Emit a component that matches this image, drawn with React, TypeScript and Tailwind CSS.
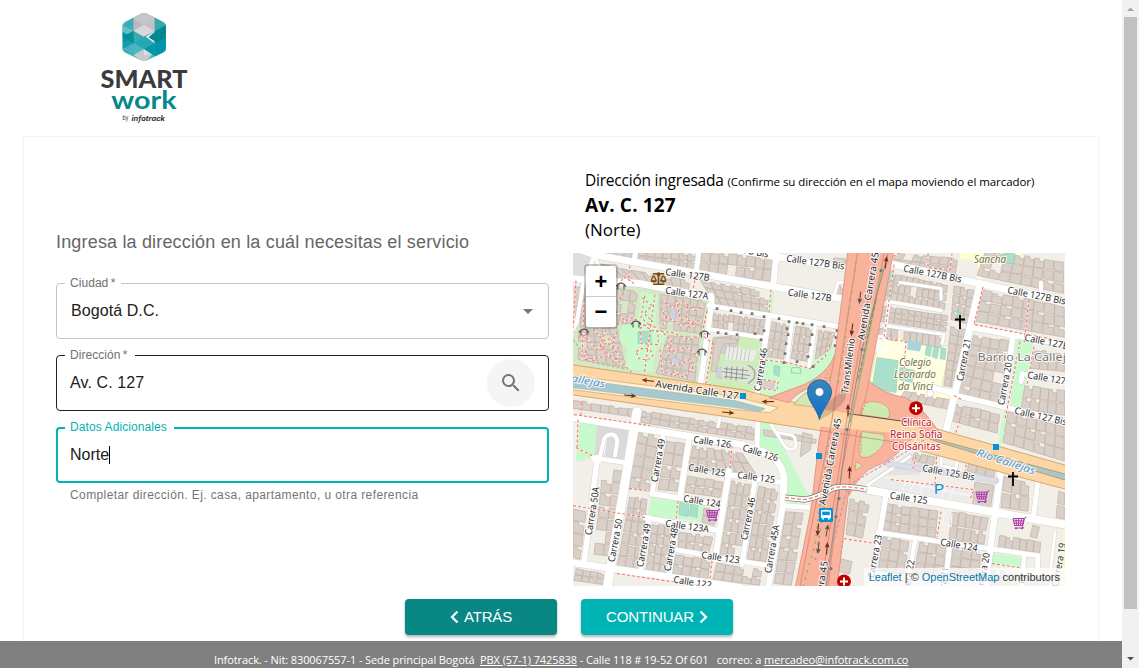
import React from "react";
import { FaBalanceScale } from "react-icons/fa";
import { MdSearch, MdArrowDropDown } from "react-icons/md";

type P = [number, number];
type Block = [P, P, P, P, number, number];

/* Building blocks: four corners (TL, TR, BR, BL), columns, rows */
const BLOCKS: Block[] = [
  [[600, 248], [633, 252], [631, 261], [600, 256], 4, 1],
  [[639, 250], [696, 254], [695, 270], [638, 262], 7, 2],
  [[702, 252], [774, 258], [771, 282], [700, 272], 8, 2],
  [[600, 264], [690, 280], [689, 292], [620, 280], 9, 1],
  [[700, 280], [770, 292], [767, 313], [714, 304], 7, 3],
  [[713, 313], [766, 320], [763, 335], [713, 328], 10, 2],
  [[771, 322], [789, 325], [784, 360], [765, 357], 3, 4],
  [[796, 326], [812, 329], [807, 362], [791, 359], 3, 4],
  [[819, 330], [835, 333], [830, 350], [815, 360], 3, 3],
  [[834, 258], [846, 259], [845, 266], [832, 264], 1, 1],
  [[838, 285], [845, 286], [843, 297], [835, 295], 1, 1],
  [[574, 286], [590, 288], [586, 330], [574, 326], 2, 4],
  [[617, 288], [638, 291], [633, 324], [612, 325], 3, 3],
  [[598, 302], [614, 300], [612, 326], [590, 326], 2, 3],
  [[660, 294], [706, 301], [701, 334], [660, 329], 6, 4],
  [[579, 330], [617, 327], [626, 368], [578, 360], 5, 5],
  [[668, 336], [700, 336], [695, 382], [656, 374], 5, 5],
  [[713, 338], [740, 334], [738, 346], [712, 354], 3, 2],
  [[573, 400], [637, 410], [637, 418], [573, 409], 7, 1],
  [[642, 411], [757, 428], [754, 441], [641, 423], 12, 2],
  [[763, 429], [817, 438], [816, 444], [764, 436], 2, 1],
  [[573, 508], [587, 511], [580, 560], [573, 558], 1, 4],
  [[603, 468], [625, 471], [613, 557], [594, 555], 2, 7],
  [[638, 431], [659, 437], [649, 492], [629, 489], 2, 5],
  [[667, 440], [685, 444], [678, 492], [658, 490], 2, 4],
  [[693, 446], [742, 453], [756, 474], [688, 470], 7, 2],
  [[688, 476], [724, 482], [720, 498], [685, 493], 4, 2],
  [[630, 496], [647, 499], [641, 571], [617, 568], 3, 6],
  [[652, 524], [672, 527], [665, 575], [646, 572], 3, 5],
  [[679, 532], [713, 537], [709, 554], [678, 549], 4, 2],
  [[676, 555], [711, 560], [708, 580], [672, 574], 4, 2],
  [[732, 481], [751, 484], [740, 559], [720, 556], 3, 6],
  [[759, 486], [779, 489], [766, 562], [747, 560], 3, 6],
  [[717, 563], [763, 570], [760, 586], [713, 580], 5, 2],
  [[786, 512], [804, 513], [792, 586], [774, 584], 2, 6],
  [[704, 508], [718, 511], [715, 526], [702, 523], 1, 2],
  [[576, 569], [606, 574], [603, 585], [574, 581], 4, 2],
  [[803, 430], [813, 434], [811, 450], [800, 458], 1, 1],
  [[850, 498], [870, 501], [863, 539], [846, 535], 2, 3],
  [[841, 558], [853, 561], [850, 575], [838, 572], 1, 1],
  [[897, 254], [958, 258], [956, 276], [890, 265], 7, 2],
  [[890, 273], [948, 285], [945, 310], [884, 301], 10, 3],
  [[883, 306], [948, 316], [946, 332], [881, 322], 10, 3],
  [[954, 286], [975, 290], [969, 325], [951, 320], 3, 4],
  [[951, 326], [968, 330], [957, 389], [944, 386], 2, 7],
  [[879, 327], [942, 336], [941, 348], [879, 339], 10, 1],
  [[986, 250], [1064, 262], [1064, 294], [977, 276], 8, 3],
  [[983, 290], [1065, 307], [1065, 338], [976, 322], 8, 3],
  [[974, 335], [1009, 341], [1000, 407], [957, 395], 4, 6],
  [[1035, 350], [1065, 354], [1065, 372], [1030, 369], 4, 2],
  [[1025, 385], [1065, 391], [1065, 416], [1021, 410], 5, 2],
  [[905, 391], [953, 400], [950, 410], [899, 400], 6, 1],
  [[954, 404], [1000, 414], [998, 434], [949, 421], 5, 2],
  [[1008, 412], [1065, 426], [1065, 462], [1003, 443], 6, 3],
  [[915, 452], [936, 457], [933, 466], [912, 461], 3, 1],
  [[970, 457], [996, 465], [994, 478], [967, 472], 3, 1],
  [[975, 482], [994, 485], [990, 512], [972, 509], 1, 1],
  [[1004, 475], [1030, 482], [1028, 512], [1001, 508], 3, 2],
  [[1059, 490], [1065, 492], [1065, 520], [1056, 518], 1, 2],
  [[884, 503], [938, 511], [936, 538], [881, 530], 6, 3],
  [[952, 511], [989, 518], [984, 545], [949, 540], 5, 2],
  [[993, 534], [1041, 542], [1040, 553], [991, 548], 7, 1],
  [[1033, 525], [1040, 527], [1037, 539], [1030, 537], 1, 1],
  [[883, 537], [910, 541], [904, 575], [878, 571], 3, 3],
  [[920, 542], [946, 546], [943, 577], [914, 573], 3, 3],
  [[953, 547], [982, 552], [978, 580], [949, 576], 3, 3],
  [[991, 570], [1020, 574], [1018, 587], [989, 587], 3, 1],
  [[1027, 573], [1050, 577], [1048, 587], [1025, 587], 2, 1],
];

function noise(seed: number) {
  const v = Math.sin(seed * 12.9898) * 43758.5453;
  return v - Math.floor(v);
}

function buildingPath() {
  let d = "";
  let s = 1;
  for (const [a, b, c, e, cols, rows] of BLOCKS) {
    const at = (u: number, v: number) => {
      const x = (a[0] * (1 - u) + b[0] * u) * (1 - v) + (e[0] * (1 - u) + c[0] * u) * v;
      const y = (a[1] * (1 - u) + b[1] * u) * (1 - v) + (e[1] * (1 - u) + c[1] * u) * v;
      return `${x.toFixed(1)} ${y.toFixed(1)}`;
    };
    for (let i = 0; i < cols; i++) {
      for (let j = 0; j < rows; j++) {
        s++;
        if (cols * rows > 4 && noise(s) < 0.03) continue;
        const gx = noise(s + 500) * 0.09;
        const gy = noise(s + 900) * 0.14;
        const u0 = i / cols;
        const u1 = (i + 1 - gx) / cols;
        const v0 = (j + gy) / rows;
        const v1 = (j + 0.98) / rows;
        const um = (u0 + u1) / 2;
        const vm = v0 + (v1 - v0) * 0.25;
        d += noise(s + 77) > 0.7
          ? `M${at(u0, v0)}L${at(um, v0)}L${at(um, vm)}L${at(u1, vm)}L${at(u1, v1)}L${at(u0, v1)}Z`
          : `M${at(u0, v0)}L${at(u1, v0)}L${at(u1, v1)}L${at(u0, v1)}Z`;
      }
    }
  }
  return d;
}

const ROADS: [string, number][] = [
  ["M573 248L598 256L847 300", 7],
  ["M712 246L847 269", 7],
  ["M572 279L640 284L711 298", 7],
  ["M709 306L840 327", 5],
  ["M636 250L634 263", 5],
  ["M699 250L696 274", 5],
  ["M711 296Q713 303 710 315L700 388", 5.5],
  ["M777 250L773 288", 6],
  ["M769 317L757 396", 5.5],
  ["M792 322L787 362", 4],
  ["M815 327L809 367", 4],
  ["M711 330L763 338", 4.5],
  ["M834 296L838 283L847 283", 3],
  ["M596 252L583 285L577 322L573 330", 4],
  ["M592 252L602 272", 3],
  ["M890 264L1065 303", 7],
  ["M980 284L950 415L944 440", 7],
  ["M973 328L1065 345", 6],
  ["M1013 337L1003 405", 5.5],
  ["M934 388L957 396L1065 422", 5.5],
  ["M1021 382L1022 374L1065 381", 5],
  ["M889 265L872 340", 2],
  ["M888 302L941 311", 3.5],
  ["M900 283L941 289V300", 3],
  ["M883 326L944 335L942 344", 3],
  ["M1041 283V294", 4],
  ["M889 303L884 340", 3],
  ["M572 418L742 445L765 453Q781 460 784 478L783 506", 7],
  ["M637 412L607 589", 9],
  ["M597 460L584 565", 5.5],
  ["M593 458L625 463", 5],
  ["M600 457L604 440Q606 434 613 435Q618 437 617 444L615 456", 4],
  ["M572 563L742 588", 7],
  ["M663 438L652 494", 5],
  ["M689 440L680 498", 6],
  ["M652 494L720 505", 6],
  ["M645 518L719 531", 5.5],
  ["M649 518L640 573", 5],
  ["M677 523L669 577", 5],
  ["M675 550L768 566", 5],
  ["M729 471L715 560", 6],
  ["M727 475L783 483", 5.5],
  ["M755 481L742 565", 5],
  ["M783 505L768 589", 6],
  ["M783 506L808 508", 5],
  ["M758 420L757 447", 5],
  ["M720 418L718 427", 3],
  ["M867 490L900 496L1065 525", 8],
  ["M1002 462L985 589", 6.5],
  ["M1038 481L1033 520", 5],
  ["M878 533L940 542L1038 556L1037 575L1020 573", 5],
  ["M886 496L870 589", 5.5],
  ["M915 541L907 589", 4.5],
  ["M950 543L945 589", 5],
  ["M1055 533L1050 575", 3],
  ["M1024 556L1022 589", 4.5],
  ["M942 450L941 466L956 469L958 458L943 455", 3],
  ["M771 425L785 447Q788 451 794 449Q797 447 795 440Q795 436 789 435L777 433", 3],
  ["M867 486L910 457", 3],
];

const PATHS = [
  "M630 266L628 279", "M696 276L693 290", "M771 290L769 313", "M576 281L572 345",
  "M584 300L582 360", "M655 295L643 384", "M612 327L633 318L652 331L672 333L690 340L706 334",
  "M641 334Q636 328 648 325Q660 325 658 345L641 344Z", "M636 352Q648 344 653 355Q650 362 639 359Z",
  "M586 338L597 350L607 343L620 356L612 364", "M593 329L604 341L615 338", "M664 345L675 352L686 347L697 356",
  "M661 300L672 308L684 302L695 311L703 306", "M665 316L681 326L699 321", "M600 296L611 301L624 297",
  "M760 360L788 363L810 369L825 357L830 345", "M829 333L837 338", "M713 342L706 384L757 399",
  "M763 380L778 382L777 391L764 389", "M581 403L581 416", "M576 448L594 457", "M578 420L577 450",
  "M573 506L645 518", "M629 489L650 491", "M678 501L676 520", "M732 446L730 470", "M712 561L710 580",
  "M617 574L740 592", "M928 254V268L950 270L952 254", "M975 325L1065 342", "M983 287L974 325",
  "M1029 300L1024 345", "M954 396L962 400", "M1020 342L1005 420", "M1034 347L1027 385",
  "M893 257L900 253", "M894 265L884 338L906 342L903 385",
  "M844 539L876 544", "M843 541L836 589", "M938 432L935 485", "M967 460L965 473", "M891 480L974 490L970 500",
  "M941 512L937 538", "M916 457L912 472", "M992 564L1019 568", "M960 421L954 438", "M616 290L624 277L634 284",
  "M574 415L650 426", "M704 337L714 345", "M707 311L703 329", "M585 360L610 356L625 366L634 375",
  "M598 306L606 318L616 312L626 322", "M645 296L641 318L650 326", "M588 346L584 356L596 362", "M665 360L676 366L690 360L694 372",
  "M660 330L672 342L668 356", "M676 300L680 318L690 328", "M606 330L600 346L610 356",
  "M642 298L652 306L644 314L653 322", "M661 308L668 322L660 326", "M688 306L686 318L696 328", "M617 332L612 346L622 350",
  "M672 372L684 378L694 366", "M660 350L662 372L676 376", "M590 292L598 298L592 312L586 322", "M578 338L590 334",
];

interface LabelProps {
  a: P;
  b: P;
  children: string;
  size?: number;
  fill?: string;
  italic?: boolean;
}

function Label({ a, b, children, size = 9.6, fill = "#2b2b2b", italic }: LabelProps) {
  const dx = b[0] - a[0];
  const dy = b[1] - a[1];
  return (
    <text
      transform={`translate(${a[0]} ${a[1]}) rotate(${(Math.atan2(dy, dx) * 180) / Math.PI})`}
      textLength={Math.hypot(dx, dy)}
      lengthAdjust="spacingAndGlyphs"
      fontSize={size}
      fill={fill}
      fontStyle={italic ? "italic" : "normal"}
      stroke="#ffffff"
      strokeOpacity={0.85}
      strokeWidth={2}
      strokeLinejoin="round"
      paintOrder="stroke"
    >
      {children}
    </text>
  );
}

const LABELS: [string, number, number, number, number][] = [
  ["Calle 127B", 665, 275.5, 709, 281.5],
  ["Calle 127A", 665, 294, 708, 300],
  ["Calle 127B Bis", 711, 248, 768, 258],
  ["Calle 127B Bis", 786, 262, 844, 270],
  ["Calle 127B", 787.5, 296, 831, 302],
  ["TransMilenio", 848, 394.5, 855, 339],
  ["Carrera 46", 760.5, 392, 767.5, 349],
  ["Calle 127B Bis", 903, 272, 961, 283],
  ["Calle 127B Bis", 1007, 293.5, 1065, 305],
  ["Calle 127B", 1024, 341, 1068, 350],
  ["Carrera 21", 963, 382, 971, 339.5],
  ["Calle 127A", 1027, 378.5, 1071, 386],
  ["Carrera 20", 1004, 406, 1012, 363.5],
  ["Calle 127 Bis", 1014, 414, 1066, 426],
  ["Calle 126", 693, 443, 730.5, 448.5],
  ["Calle 125", 688, 471, 725, 477],
  ["Calle 124", 683, 502, 720, 508],
  ["Calle 123A", 665, 527, 708.5, 533],
  ["Calle 123", 701, 558.5, 739, 564],
  ["Calle 122", 673, 583, 711, 589],
  ["Carrera 49", 657.5, 483, 665, 440],
  ["Carrera 50A", 591.5, 536, 599.5, 488],
  ["Carrera 50", 614.5, 563, 622.5, 520],
  ["Carrera 49", 643, 568, 651, 524.5],
  ["Carrera 48", 670.5, 572, 678, 529],
  ["Calle 125", 737, 478.5, 774.5, 483.5],
  ["Carrera 46", 747, 541, 755.5, 498.5],
  ["Carrera 45A", 771, 574, 779.5, 526],
  ["Avenida Carrera 45", 864, 341, 879, 253],
  ["Avenida Carrera 45", 825.5, 506, 841.5, 419],
  ["Avenida Carrera 45", 813, 651, 828, 562],
  ["Calle 125", 889.5, 499, 927, 504.5],
  ["Carrera 23", 874, 579, 882, 536],
  ["Calle 125 Bis", 922, 471.5, 974, 481],
  ["Calle 124", 940, 545.5, 977, 552],
  ["Carrera 22", 907, 604, 914.5, 561],
  ["Carrera 20", 982, 597, 990, 554],
  ["Carrera 19", 1058, 588, 1066, 544],
  ["Carrera 21", 942, 611, 949, 568],
  ["Carrera 19", 1018, 619, 1026, 576],
];

function Arrow({ x, y, r, c = "#6b3a0c" }: { x: number; y: number; r: number; c?: string }) {
  return (
    <g transform={`translate(${x} ${y}) rotate(${r})`}>
      <path d="M-6 0H3" stroke={c} strokeWidth={1.1} />
      <path d="M1 -2.4L6.5 0L1 2.4L2 0Z" fill={c} />
    </g>
  );
}

function Cart({ x, y }: { x: number; y: number }) {
  return (
    <g transform={`translate(${x} ${y})`} stroke="#ac39ac" fill="none" strokeWidth={1}>
      <path d="M-6.5 -4.5H4.5L3 2.5H-5Z M-6 -2.2H4 M-5.5 .2H3.5 M-3.6 -4.5L-3 2.5 M-1 -4.5V2.5 M1.8 -4.5L1 2.5 M7 -6L5 -5L3 3.5L4 5H-5" />
      <circle cx={-3.5} cy={5.4} r={0.6} fill="#ac39ac" />
      <circle cx={2.5} cy={5.4} r={0.6} fill="#ac39ac" />
    </g>
  );
}

function Hospital({ x, y }: { x: number; y: number }) {
  return (
    <g transform={`translate(${x} ${y})`}>
      <circle r={6.9} fill="#bf0000" />
      <path d="M-4 0H4M0 -4V4" stroke="#fff" strokeWidth={2} />
    </g>
  );
}

function Entrance({ x, y }: { x: number; y: number }) {
  return <path d={`M${x - 3} ${y + 5}V${y}M${x + 3} ${y}V${y + 5}M${x - 5} ${y + 2}L${x - 3} ${y - 0.5}Q${x} ${y - 2.5} ${x + 3} ${y - 0.5}L${x + 5} ${y + 2}`} stroke="#555" strokeWidth={1.1} fill="none" />;
}

const BOLLARDS: P[] = [
  [717, 309], [731, 311], [741, 313], [752, 314], [764, 317], [779, 319], [789, 322], [797, 323], [803, 324], [812, 325],
  [824, 327], [837, 331], [836, 338], [835, 346], [718, 333], [726, 334], [737, 335], [755, 334], [761, 340], [764, 331],
  [788, 335], [786, 344], [785, 354], [784, 363], [797, 362], [812, 335], [810, 345], [808, 357], [813, 367], [787, 329],
];

function MapDrawing() {
  return (
    <svg className="block h-[333px] w-[492px] [font-family:'Noto_Sans',sans-serif]" viewBox="573 253.4 492 333">
      <rect x={572} y={252} width={495} height={336} fill="#f2efe9" />
      {/* housing estates and parks */}
      <path d="M580 284L608 280L711 300L700 388L572 366V345Z" fill="#d6e8c6" />
      <path d="M572 252H592L583 284L572 282Z" fill="#dedede" />
      <path d="M713 337L745 337L764 342L755 392L704 388Z" fill="#cfecbb" />
      <path d="M757 396L764 358L808 368L830 343L836 352L826 378L795 398L760 400Z" fill="#c8facc" />
      <path d="M771 290L774 290L772 316L766 314Z" fill="#c8facc" />
      <path d="M822 348L833 350L826 366L818 364Z" fill="#c8facc" />
      <path d="M579 422L597 426L594 458L576 462Z" fill="#c8facc" />
      <path d="M597 426L628 431L625 464L594 458Z" fill="#dadada" />
      <path d="M652 496L704 505L703 522L647 516Z" fill="#c8facc" />
      <path d="M760 421L772 424L809 497L802 504L784 504L785 474L760 448Z" fill="#c8facc" />
      <path d="M1016 339L1033 342L1022 408L1010 405Z" fill="#c8facc" />
      <path d="M1004 412L1009 413L1002 445L998 443Z" fill="#c8facc" />
      <path d="M992 554L1022 558L1020 569L990 565Z" fill="#c8facc" />
      {/* school grounds */}
      <path d="M881 331L906 341L950 347L942 386L953 398L949 411L898 397L870 382Z" fill="#ffffe0" stroke="#e2df9a" strokeWidth={0.7} />
      <path d="M960 252L1022 252L1020 267L983 263L981 282L977 280L978 262L960 259Z" fill="#ffffd0" />
      <path d="M573 340L590 362L630 370" stroke="#a9d28f" strokeWidth={2} fill="none" strokeDasharray="3 2" />
      <path d="M884 479L974 491L970 502L868 487Z" fill="#ebebeb" />
      <path d="M868 482L910 453L925 461L919 475L886 476Z" fill="#e3e3e3" />
      <path d={buildingPath()} fill="#d9d0c9" stroke="#c3b3a7" strokeWidth={0.75} />
      <path d="M641 293L658 295L655 327L667 332L664 342L657 346L652 373L626 369L627 348L619 340L622 326L638 323Z" fill="#c8facc" />
      <g fill="#aae0cb" stroke="#8fcdb5" strokeWidth={0.6}>
        <path d="M877 358L898 361L896 393L872 388Z" />
        <path d="M638 332H651V344H638Z M680 502L689 503L688 517L679 515Z M691 504L698 505L697 518L689 516Z" />
        <path d="M927 345L932 346L930 357L925 355Z M934 347L939 348L937 359L932 357Z M941 348L946 349L945 360L940 359Z" />
        <path d="M1003 254L1015 254L1014 264L1001 263Z M887 270L894 272L892 283L886 281Z M887 292L890 293V296H887Z M774 366L780 367L779 377L774 375Z M958 310L960 311V318L957 317Z M900 368L915 371L912 383L899 380Z" />
      </g>
      <path d="M908 341L922 343L920 352L907 350Z" fill="#a9d3df" />
      <path d="M792 368L800 368L801 374L791 373Z" fill="none" stroke="#9bd0a2" />
      <g fill="#d1d1de" stroke="#b9b9c9" strokeWidth={0.6}>
        <path d="M671 308L677 310L674 322L669 320Z M719 345L726 346L725 354L718 353Z M672 357L680 360L678 367L671 365Z" />
        <path d="M716 369L724 367L722 379L717 378Z" />
      </g>
      <path d="M714 345L718 338L737 340L736 344L724 344L720 354L716 372L711 372Z" fill="#d9d0c9" stroke="#c3b3a7" strokeWidth={0.7} />
      <path d="M762 381L775 382L773 390L762 388Z" fill="#d9d0c9" stroke="#c3b3a7" strokeWidth={0.7} />
      <path d="M727 347L757 351L753 362L725 360Z" fill="#ededed" />
      <path d="M722 364L756 367L752 384L722 379Z" fill="#dde6d4" />
      <path d="M730 347L728 360M734 348L732 360M738 348L736 361M742 349L740 361M746 349L744 361M750 350L748 362" fill="none" stroke="#b9c6ae" strokeWidth={0.8} />
      <path d="M606 441L604 456M892 480L970 496M906 482L902 491M914 483L910 492M924 484L920 494M946 487L940 502M953 488L949 503M944 512L943 525L951 527L952 513" fill="none" stroke="#f8f8f8" strokeWidth={1.2} />
      <path d="M722 372L750 376M727 367L726 379M732 367L731 380M737 367L736 381M743 368L742 380M724 369L748 371M724 377L747 379" fill="none" stroke="#8f8f8f" strokeWidth={0.9} />
      <path d="M748 366Q757 369 754 379L748 384" fill="none" stroke="#aaa" strokeWidth={1.6} />
      {/* streets */}
      <g fill="none" strokeLinejoin="round" strokeLinecap="round">
        {ROADS.map(([d, w]) => <path key={`c${d}`} d={d} stroke="#d3cfca" strokeWidth={w + 0.8} />)}
        {ROADS.map(([d, w]) => <path key={d} d={d} stroke="#ffffff" strokeWidth={w} />)}
        <path d="M888 464L996 481" stroke="#c5c5d6" strokeWidth={6} />
        <path d="M888 464L996 481" stroke="#dddde8" strokeWidth={5} />
        <path d="M1067 528L1060 589" stroke="#f7fabf" strokeWidth={6} />
      </g>
      <circle cx={597} cy={460} r={4.5} fill="#fff" />
      <circle cx={930} cy={394} r={3.5} fill="#fff" stroke="#bbb" strokeWidth={0.5} />
      <path d="M930 388L956 392" stroke="#fff" strokeWidth={3} />
      <path d="M878 337Q888 335 886 350Q881 356 877 350Z" fill="none" stroke="#fff" strokeWidth={3} />
      <g fill="none" stroke="#fff" strokeOpacity={0.6} strokeWidth={1.8}>
        {PATHS.map((d) => <path key={`u${d}`} d={d} />)}
      </g>
      <g fill="none" stroke="#f5766b" strokeWidth={1.1} strokeDasharray="3 2">
        {PATHS.map((d) => <path key={d} d={d} />)}
      </g>
      <g fill="#777">
        {BOLLARDS.map(([x, y]) => <rect key={`${x}-${y}`} x={x - 1.3} y={y - 1.3} width={2.7} height={2.7} />)}
      </g>
      {/* Avenida Calle 127 with the canal */}
      <path d="M571 365L742 390L790 402L900 419L1067 466V490L900 446L820 431L740 419L571 395Z" fill="#fcd6a4" stroke="#c98f46" strokeWidth={0.7} />
      <path d="M571 376L735 397L778 408L770 413L735 410L571 390Z" fill="#fff1d6" stroke="#cf9a55" strokeWidth={0.6} />
      <path d="M571 379L735 401L765 409L760 412L735 408L571 388Z" fill="#a5c9cf" stroke="#8fb4b5" strokeWidth={0.5} />
      <path d="M915 434L1067 475V481L940 443Z" fill="#a5c9cf" stroke="#b98f57" strokeWidth={0.8} />
      <path d="M780 405L905 428" stroke="#ba9d85" strokeWidth={0.8} strokeDasharray="4 2" />
      {/* Avenida Carrera 45 interchange */}
      <g fill="#f9b29c" stroke="#d98572" strokeWidth={0.7}>
        <path d="M835 355Q828 374 804 385L769 398L789 403Q797 392 815 386L836 379Z" />
        <path d="M866 378Q880 394 905 398Q922 406 940 434L928 436Q914 434 903 447Q893 461 877 466Q860 472 849 496L844 460L849 435L857 420Z" />
        <path d="M848 250H894L874 355L866 396L858 422L850 480L837 589H795L811 510L819 440L822 425L835 355Z" />
      </g>
      <path d="M779 403L850 414L900 421L925 431L918 438L890 433L819 427L785 418Z" fill="#fcd6a4" />
      <g fill="#cdebb0" stroke="#e0806f" strokeWidth={0.6}>
        <path d="M794 405Q800 395 814 389L819 408Z" />
        <path d="M863 404Q876 399 886 406Q892 412 888 419L861 415Z" />
        <path d="M862 432L884 435Q887 444 876 453Q866 461 860 456Q857 449 862 432Z" />
        <path d="M856 462L863 466L855 471Z M828 374L830 378L825 378Z" />
      </g>
      <path d="M866 402L861 415M861 434L861 453" stroke="#f5766b" strokeDasharray="2 1.5" />
      <g fill="none">
        <path d="M848 414L920 424" stroke="#333" strokeWidth={0.8} />
        <path d="M820 431L905 444M858 250L838 380L832 420L800 587" stroke="#d27866" strokeWidth={0.7} />
        <path d="M876 254L846 425L821 587M884 254L858 388L842 470L828 587" stroke="#d27866" strokeWidth={0.7} />
        <path d="M882 268L863 366L850 423" stroke="#a7b980" strokeWidth={1.4} />
        <path d="M856 262L838 385M830 430L815 545L803 587M838 425L815 562" stroke="#a9ad70" strokeWidth={1.7} strokeDasharray="2.5 5" />
        <path d="M888 254L862 350L846 440L838 500L826 587" stroke="#888" strokeWidth={0.9} />
        <path d="M876 300L858 380" stroke="#70945e" strokeWidth={1} strokeDasharray="5 2" />
        <path d="M847 490L822 587" stroke="#a99bb0" strokeWidth={1} strokeDasharray="4 2" />
        <path d="M785 498L805 500Q820 497 832 489Q842 485 867 490" stroke="#777" strokeWidth={6} />
        <path d="M785 498L805 500Q820 497 832 489Q842 485 867 490" stroke="#fff" strokeWidth={4.6} />
        <path d="M785 498L805 500Q820 497 832 489Q842 485 867 490" stroke="#ef8074" strokeWidth={1.3} strokeDasharray="4 2" />
        <path d="M853 483L908 451L928 438" stroke="#a56fa5" strokeWidth={0.8} strokeDasharray="3 2" />
      </g>
      <g fill="#777">
        <circle cx={881} cy={271} r={1.6} /><circle cx={862} cy={350} r={1.6} /><circle cx={839} cy={499} r={1.6} />
        <circle cx={836} cy={517} r={1.6} /><circle cx={831} cy={569} r={1.6} /><circle cx={847} cy={430} r={1.6} />
      </g>
      {LABELS.map(([t, x1, y1, x2, y2]) => <Label key={`${t}${x1}${y1}`} a={[x1, y1]} b={[x2, y2]}>{t}</Label>)}
      <Label a={[742, 451]} b={[777, 462]}>Calle 126</Label>
      <Label a={[655, 387.5]} b={[738, 400]} size={10}>Avenida Calle 127</Label>
      <Label a={[544, 377]} b={[604.5, 388]} size={10.5} fill="#5b94c4" italic>Río Callejas</Label>
      <Label a={[976, 456]} b={[1034, 475]} size={10.5} fill="#5b94c4" italic>Río Callejas</Label>
      <Label a={[974, 263]} b={[1006, 263]} size={10} fill="#74743a" italic>Sancha</Label>
      <Label a={[899, 366]} b={[931, 366]} size={10} fill="#74743a" italic>Colegio</Label>
      <Label a={[894, 378]} b={[936, 378]} size={10} fill="#74743a" italic>Leonardo</Label>
      <Label a={[898, 390]} b={[933, 390]} size={10} fill="#74743a" italic>da Vinci</Label>
      <Label a={[901, 426.4]} b={[931.5, 426.4]} size={10} fill="#bf2030">Clínica</Label>
      <Label a={[890, 438.4]} b={[942.5, 438.4]} size={10} fill="#bf2030">Reina Sofia</Label>
      <Label a={[892, 450.4]} b={[940.5, 450.4]} size={10} fill="#bf2030">Colsánitas</Label>
      <Label a={[977.5, 361.5]} b={[1073, 361.5]} size={11.5} fill="#777">Barrio La Calleja</Label>
      <Arrow x={648} y={381} r={187} />
      <Arrow x={630} y={396} r={5} />
      <Arrow x={728} y={413} r={5} />
      <Arrow x={768} y={402} r={180} c="#6b2a1c" />
      <Arrow x={852} y={330} r={97} c="#6b2a1c" />
      <Arrow x={860} y={298} r={97} c="#555" />
      <Arrow x={886} y={263} r={-83} c="#6b2a1c" />
      <Arrow x={848} y={411} r={-90} c="#6b2a1c" />
      <Arrow x={849.5} y={473} r={-87} c="#6b2a1c" />
      <Arrow x={818} y={530} r={95} c="#6b2a1c" />
      <Arrow x={827} y={531} r={-80} c="#555" />
      <Arrow x={818.5} y={548} r={95} c="#555" />
      <Arrow x={827} y={549} r={-85} c="#6b2a1c" />
      <Entrance x={621} y={285} /><Entrance x={636} y={323} /><Entrance x={584} y={331} />
      <Entrance x={704.5} y={333} /><Entrance x={702} y={351} />
      <FaBalanceScale x={650.5} y={271} width={15} height={14} color="#734a08" />
      <path d="M960 315.4V329.4M955 319.9H965M1013 472.4V486.4M1008 476.9H1018" stroke="#000" strokeWidth={1.8} />
      <g fill="#0092da">
        <rect x={740} y={393.4} width={6} height={6} />
        <rect x={816} y={453.4} width={6} height={6} />
        <rect x={993} y={444.4} width={6} height={6} />
        <rect x={819} y={508.4} width={14} height={14} rx={1.5} />
      </g>
      <path d="M821 511Q826 509.5 831 511V518.5H829.8V520H828V518.5H824V520H822.2V518.5H821Z" fill="#fff" />
      <path d="M822.2 512H829.8V515.5H822.2Z" fill="#0092da" />
      <text x={934} y={494.4} fontSize={15} fontWeight={500} fill="#0092da" className="[font-family:'Liberation_Sans',sans-serif]">P</text>
      <Cart x={713} y={515.4} /><Cart x={982.5} y={497} /><Cart x={1019.5} y={523.4} />
      <Hospital x={916} y={408.6} /><Hospital x={844} y={581.8} />
      {/* location marker */}
      <path d="M820 420Q826 402 839 394Q848 391 845 400Q839 411 820 420Z" fill="#000" opacity={0.14} />
      <defs>
        <linearGradient id="pin" x1="0" y1="0" x2="0" y2="1">
          <stop offset="0" stopColor="#3a85ba" /><stop offset="1" stopColor="#126fc6" />
        </linearGradient>
      </defs>
      <path d="M819.5 419.9C817 409.4 807.5 401.4 807.5 392.2A12 12 0 0 1 831.5 392.2C831.5 401.4 822 409.4 819.5 419.9Z" fill="url(#pin)" stroke="#2e6c97" />
      <circle cx={819.5} cy={392.4} r={4.3} fill="#fff" stroke="#2e6c97" strokeWidth={0.6} />
    </svg>
  );
}

function Logo() {
  return (
    <svg width={100} height={120} viewBox="94 8 100 120" className="block">
      <defs>
        <clipPath id="hex">
          <path d="M183 41Q192 36 201 41L249 65Q258 70 258 80V143Q258 153 249 158L201 181Q192 185 183 181L136 158Q127 153 127 143V80Q127 70 136 65Z" />
        </clipPath>
      </defs>
      <g transform="translate(80 0) scale(.3333)" clipPath="url(#hex)">
        <path d="M120 30H265V190H120Z" fill="#4bb4bf" />
        <path d="M127 76L161 52V92L127 112Z" fill="#3aadb9" />
        <path d="M127 76L161 92L127 112Z" fill="#65bdc7" />
        <path d="M127 95L161 114L127 130Z" fill="#0595a9" />
        <path d="M127 130L161 114V165L127 150Z" fill="#129eb0" />
        <path d="M127 148L161 130V165Z" fill="#48b4c1" />
        <path d="M161 92L192 110L161 130Z" fill="#3aacaf" />
        <path d="M161 92L127 110L161 130Z" fill="#078f99" />
        <path d="M161 130L192 110L224 130L192 148Z" fill="#24a8b4" />
        <path d="M161 130L192 148L161 165Z" fill="#4cb7c0" />
        <path d="M161 38H224V94L192 110L161 92Z" fill="#c5c4ca" />
        <path d="M161 56L192 74L161 92Z" fill="#b9b8be" />
        <path d="M192 38L224 56L192 74L161 56Z" fill="#c7c5ca" />
        <path d="M161 92L192 74L224 94L192 110Z" fill="#d8d7dc" />
        <path d="M192 74L224 56V94Z" fill="#c2c1c7" />
        <path d="M161 165L192 147L220 160L192 190Z" fill="#cac9ce" />
        <path d="M192 147L220 160L192 166Z" fill="#dddce0" />
        <path d="M224 50L262 76L224 94Z" fill="#36a9aa" />
        <path d="M224 94L262 74V112Z" fill="#008a8d" />
        <path d="M192 110L224 94V130Z" fill="#078b93" />
        <path d="M196 110L224 94V98L208 112L224 122V130Z" fill="#e9e9ec" />
        <path d="M224 94L262 112L224 130Z" fill="#03878c" />
        <path d="M206 112L224 96V124Z" fill="#03878c" />
        <path d="M224 130L262 112V150L224 170Z" fill="#0096a8" />
        <path d="M192 147L224 130V168Z" fill="#0097a6" />
      </g>
      <text x={100.6} y={87.8} textLength={86.8} lengthAdjust="spacingAndGlyphs" fontSize={25} fontWeight={900} fill="#3b3b3b" className="[font-family:Lato,sans-serif]">SMART</text>
      <text x={111.3} y={109} textLength={65.2} lengthAdjust="spacingAndGlyphs" fontSize={25} fontWeight={700} fill="#07898c" className="[font-family:Lato,sans-serif]">work</text>
      <text x={122.5} y={120.3} textLength={6} lengthAdjust="spacingAndGlyphs" fontSize={6} fill="#333" className="[font-family:Inter,sans-serif]">by</text>
      <text x={131.5} y={120.5} textLength={33.5} lengthAdjust="spacingAndGlyphs" fontSize={7} fontWeight={700} fontStyle="italic" fill="#333" className="[font-family:Inter,sans-serif]">infotrack</text>
    </svg>
  );
}

function Field({ label, labelClass, boxClass, children }: { label: string; labelClass: string; boxClass: string; children: React.ReactNode }) {
  return (
    <div className={`relative flex h-[56px] w-[493px] items-center justify-between rounded ${boxClass}`}>
      <span className={`absolute bg-white text-[12px] leading-[14px] whitespace-pre ${labelClass}`}>{label}</span>
      {children}
    </div>
  );
}

export default function App() {
  return (
    <div className="flex h-[668px] w-[1139px] overflow-hidden bg-white [font-family:'Liberation_Sans',sans-serif]">
      <div className="flex w-[1122px] flex-col">
        <header className="h-[137px] shrink-0 pt-[8px] pl-[94px]">
          <Logo />
        </header>
        <main className="mx-[24px] flex h-[504px] w-[1074px] shrink-0 flex-col shadow-[0_0_2px_rgba(0,0,0,0.16)]">
          <div className="flex h-[450px] gap-[24px] pl-[32px]">
            <section className="flex w-[493px] flex-col pt-[93px]">
              <h1 className="h-[24px] text-[18px] leading-[24px] tracking-[0.17px] whitespace-nowrap text-[#666]">Ingresa la dirección en la cuál necesitas el servicio</h1>
              <div className="mt-[29px] flex flex-col gap-[16px]">
                <Field label="Ciudad *" labelClass="-top-[8px] left-[8px] pr-[6px] pl-[5px] tracking-[0.05px] [word-spacing:-1px] text-[#707070]" boxClass="border border-[#c4c4c4]">
                  <span className="pl-[14px] text-[16px] tracking-[0.08px] text-[#212121]">Bogotá D.C.</span>
                  <MdArrowDropDown className="mr-[8px] size-[24px] text-[#757575]" />
                </Field>
                <Field label="Dirección *" labelClass="-top-[8px] left-[8px] pr-[7px] pl-[5px] tracking-[0.05px] [word-spacing:-1px] text-[#707070]" boxClass="border border-[#212121]">
                  <span className="pl-[13px] text-[16px] tracking-[0.1px] text-[#212121]">Av. C. 127</span>
                  <button className="mr-[13px] flex size-[48px] items-center justify-center rounded-full bg-[#f5f5f5]">
                    <MdSearch className="size-[24px] text-[#757575]" />
                  </button>
                </Field>
                <Field label="Datos Adicionales" labelClass="-top-[9px] left-[7px] pr-[7px] pl-[5px] tracking-[0.09px] text-[#00b3b5]" boxClass="border-2 border-[#00b3b5]">
                  <span className="flex h-[18px] items-center border-r border-black pl-[12px] text-[16px] text-[#212121]">Norte</span>
                </Field>
              </div>
              <p className="mt-[4px] pl-[14px] text-[12px] leading-[16px] tracking-[0.4px] whitespace-nowrap text-[#757575]">Completar dirección. Ej. casa, apartamento, u otra referencia</p>
            </section>
            <section className="flex w-[493px] flex-col pt-[32px] text-black [font-family:'Open_Sans','Noto_Sans',sans-serif]">
              <div className="h-[84px] pl-[12px] whitespace-nowrap">
                <p className="h-[24px] text-[15.5px] leading-[23px] tracking-[-0.22px]">Dirección ingresada <span className="text-[11.5px] tracking-[-0.07px]">(Confirme su dirección en el mapa moviendo el marcador)</span></p>
                <p className="h-[25px] text-[19px] leading-[24px] font-bold tracking-[0.15px]">Av. C. 127</p>
                <p className="h-[25px] text-[17px] leading-[24px]">(Norte)</p>
              </div>
              <div className="relative h-[333px] w-[492px] overflow-hidden">
                <MapDrawing />
                <div className="absolute top-[11px] left-[11px] flex w-[34px] flex-col rounded border-2 border-black/20 bg-white bg-clip-padding text-center text-[22px] font-bold [font-family:'Liberation_Sans',sans-serif]">
                  <button className="h-[31px] border-b border-[#ccc] leading-[31px]">+</button>
                  <button className="h-[30px] leading-[30px]">−</button>
                </div>
                <div className="absolute right-0 bottom-0 h-[18px] bg-white/70 px-[5px] text-[11px] leading-[19px] whitespace-nowrap text-[#333] [font-family:'Liberation_Sans',sans-serif]">
                  <span className="text-[#0078a8]">Leaflet</span> | © <span className="text-[#0078a8]">OpenStreetMap</span> contributors
                </div>
              </div>
            </section>
          </div>
          <div className="flex gap-[24px] pt-[12px] pl-[381px] text-[15px] tracking-[-0.15px] text-white">
            <button className="flex h-[36px] w-[152px] items-center justify-center gap-[5px] rounded bg-[#088784] shadow-[0_2px_3px_rgba(0,0,0,0.3)]">
              <svg width={9} height={14} viewBox="0 0 9 14"><path d="M7.5 1.5L2 7L7.5 12.5" fill="none" stroke="#fff" strokeWidth={2.2} /></svg>
              ATRÁS
            </button>
            <button className="flex h-[36px] w-[152px] items-center justify-center gap-[5px] rounded bg-[#00b3b5] shadow-[0_2px_3px_rgba(0,0,0,0.3)]">
              CONTINUAR
              <svg width={9} height={14} viewBox="0 0 9 14"><path d="M1.5 1.5L7 7L1.5 12.5" fill="none" stroke="#fff" strokeWidth={2.2} /></svg>
            </button>
          </div>
        </main>
        <footer className="h-[27px] shrink-0 bg-[#808080] pt-[11px] pl-[214px] text-[11px] leading-[16px] tracking-[-0.1px] whitespace-pre text-white [font-family:'Open_Sans','Noto_Sans',sans-serif]">
          Infotrack. - Nit: 830067557-1 - Sede principal Bogotá  <span className="underline">PBX (57-1) 7425838</span> - Calle 118 # 19-52 Of 601   correo: a <span className="underline">mercadeo@infotrack.com.co</span>
        </footer>
      </div>
      <div className="flex w-[17px] flex-col items-center bg-[#f1f1f1]">
        <svg className="shrink-0" width={17} height={17} viewBox="0 0 17 17"><path d="M5 11L8.5 7.5L12 11Z" fill="#a3a3a3" /></svg>
        <div className="h-[592px] w-[13px] shrink-0 bg-[#c1c1c1]" />
        <div className="flex-1" />
        <svg className="shrink-0" width={17} height={17} viewBox="0 0 17 17"><path d="M5 6L8.5 9.5L12 6Z" fill="#505050" /></svg>
      </div>
    </div>
  );
}
